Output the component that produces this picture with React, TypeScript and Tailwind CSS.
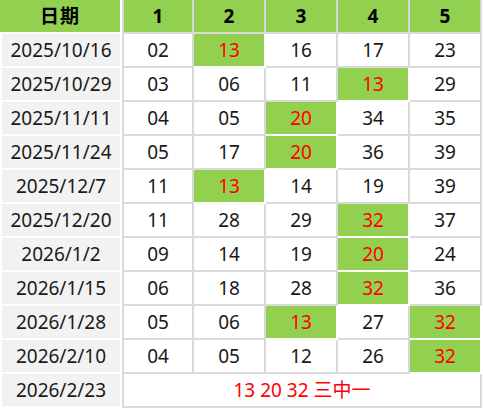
const ROWS: { date: string; nums: string[]; hit: number[] }[] = [
  { date: '2025/10/16', nums: ['02', '13', '16', '17', '23'], hit: [1] },
  { date: '2025/10/29', nums: ['03', '06', '11', '13', '29'], hit: [3] },
  { date: '2025/11/11', nums: ['04', '05', '20', '34', '35'], hit: [2] },
  { date: '2025/11/24', nums: ['05', '17', '20', '36', '39'], hit: [2] },
  { date: '2025/12/7', nums: ['11', '13', '14', '19', '39'], hit: [1] },
  { date: '2025/12/20', nums: ['11', '28', '29', '32', '37'], hit: [3] },
  { date: '2026/1/2', nums: ['09', '14', '19', '20', '24'], hit: [3] },
  { date: '2026/1/15', nums: ['06', '18', '28', '32', '36'], hit: [3] },
  { date: '2026/1/28', nums: ['05', '06', '13', '27', '32'], hit: [2, 4] },
  { date: '2026/2/10', nums: ['04', '05', '12', '26', '32'], hit: [4] },
]

const font = { fontFamily: '"Noto Sans", "Noto Sans CJK SC", sans-serif' }

export default function App() {
  return (
    <div className="w-[483px] h-[408px] bg-white text-[19px] leading-none text-[#1a1a1a]" style={font}>
      {/* header */}
      <div className="flex h-[34px] font-bold text-black">
        <div className="w-[122px] flex items-center justify-center tracking-[1px] bg-[#92d050] border-r-2 border-b-2 border-white">
          日期
        </div>
        {[1, 2, 3, 4, 5].map((n) => (
          <div
            key={n}
            className={`w-[72px] flex items-center justify-center bg-[#92d050] border-r-2 border-b-2 border-[#d9d9d9] ${
              n === 1 ? 'border-l-2' : ''
            }`}
          >
            {n}
          </div>
        ))}
      </div>

      {ROWS.map((r) => (
        <div key={r.date} className="flex h-[34px]">
          <div className="w-[122px] flex items-center justify-center bg-[#f2f2f2] border-x-2 border-b-2 border-white">
            {r.date}
          </div>
          {r.nums.map((v, i) => {
            const hit = r.hit.includes(i)
            return (
              <div
                key={i}
                className={`w-[72px] flex items-center justify-center border-r-2 border-b-2 ${
                  i === 0 ? 'border-l-2' : ''
                } ${hit ? 'bg-[#92d050] text-[#ff0000] border-white' : 'bg-white border-[#d9d9d9]'}`}
              >
                {v}
              </div>
            )
          })}
        </div>
      ))}

      <div className="flex h-[34px]">
        <div className="w-[122px] flex items-center justify-center bg-[#f2f2f2] border-x-2 border-b-2 border-white">
          2026/2/23
        </div>
        <div className="w-[360px] flex items-center justify-center bg-white border-x-2 border-b-2 border-[#d9d9d9] text-[#ff0000]">
          13 20 32 三中一
        </div>
      </div>
    </div>
  )
}
